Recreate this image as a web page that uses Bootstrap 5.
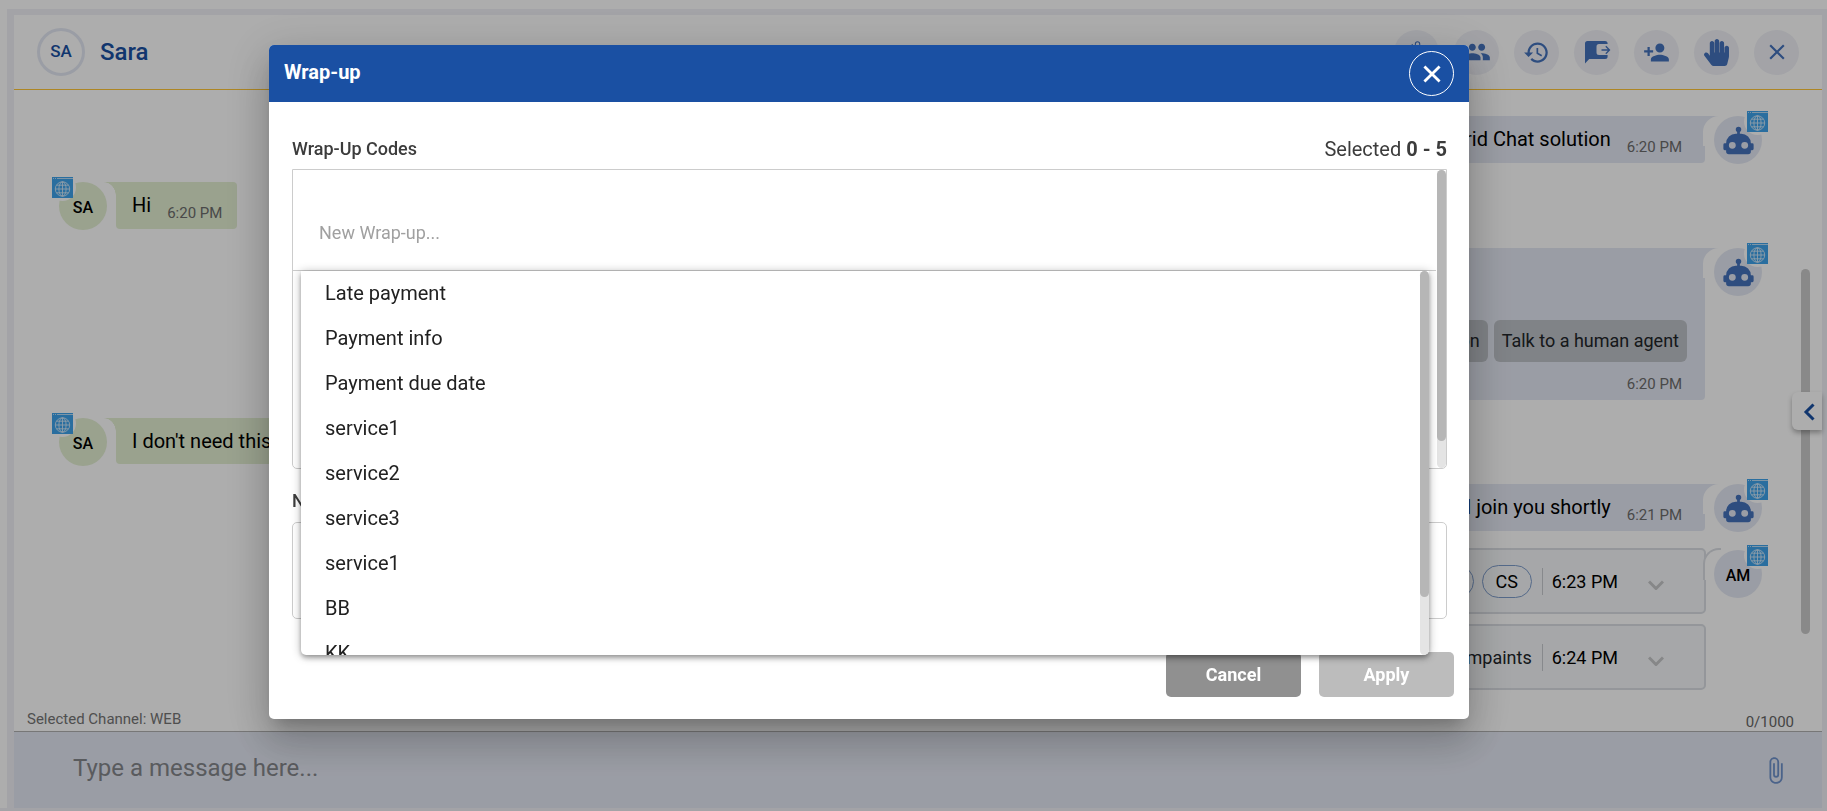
<!DOCTYPE html>
<html lang="en">
<head>
<meta charset="utf-8">
<meta name="viewport" content="width=device-width, initial-scale=1">
<title>Agent desk – Wrap-up</title>
<link href="https://cdn.jsdelivr.net/npm/bootstrap@5.3.0/dist/css/bootstrap.min.css" rel="stylesheet">
<style>
  :root { --brand: #1a50a3; --soft: #e4e8f3; --gutter: #f0f1f7; --green: #e3efd2; }
  body { font-family: Roboto, "Liberation Sans", sans-serif; color: #000; background: var(--gutter); }
  button, input, textarea { font-family: inherit; }
  .top-strip { height: 9px; background: #fff; }
  .side-strip { width: 7px; background: #fff; margin-right: 7px; }
  .desk { padding: 0 5px 3px 0; min-height: 0; }
  .panel { padding-top: 6px; min-width: 0; }
  .panel-in { background: #fff; min-height: 0; }
  .chat-head { height: 75px; padding: 0 23px; border-bottom: 1px solid #ffc636; }
  .head-avatar { width: 48px; height: 48px; border: 3px solid var(--soft); border-radius: 50%; color: var(--brand); font-size: 17px; font-weight: 500; }
  .head-name { color: var(--brand); font-size: 24px; font-weight: 500; margin-left: 15px; }
  .tool { width: 45px; height: 45px; border: 0; border-radius: 50%; background: var(--gutter); color: #4472bc; padding: 0; }
  .tools { gap: 15px; }
  .thread { padding: 26px 60px 0 45px; gap: 18px; overflow: hidden; min-height: 0; }
  .thread > * { flex-shrink: 0; }
  .msg { gap: 9px; }
  .face { position: relative; width: 48px; height: 48px; border-radius: 50%; background: var(--soft); color: #000; font-size: 16px; font-weight: 500; padding-top: 4px; z-index: 1; }
  .face.robot { color: #4472bc; padding-top: 0; }
  .msg.mine .face { background: var(--green); }
  .chan { position: absolute; top: -5px; right: -6px; width: 21px; height: 21px; }
  .chan::before { content: ""; position: absolute; inset: -3px; border-radius: 50%; background: #fff; }
  .mine .chan { right: auto; left: -7px; }
  .chan svg { position: absolute; inset: 0; }
  .bubble { position: relative; background: var(--soft); border-radius: 0 0 4px 4px; min-height: 47px; padding: 11px 23px 7px 16px; gap: 16px; font-size: 20px; line-height: 24px; }
  .bubble.short { min-height: 46px; }
  .mine .bubble { background: var(--green); border-radius: 0 4px 4px 4px; padding-right: 15px; }
  .mine .bubble::before { content: ""; position: absolute; top: 0; right: 100%; width: 12px; height: 14px; background: radial-gradient(ellipse 12px 14px at 0 100%, transparent 96%, var(--green) 100%); }
  .theirs .bubble::before, .theirs .bubble::after, .notch::before { content: ""; position: absolute; top: 0; left: calc(100% - 2px); width: 17px; }
  .theirs .bubble::before { height: 14px; background: var(--soft); }
  .theirs .bubble::after { height: 30px; background: #fff; border-top-left-radius: 16px; }
  .stamp { font-size: 15px; line-height: 18px; color: #6c6c6c; }
  .bubble > .stamp { margin-top: 11px; }
  .bubble.menu-msg { min-height: 152px; padding-right: 18px; gap: 13px; }
  .menu-msg > .stamp { margin: 0 5px 0 0; }
  .replies { gap: 6px; }
  .reply { border: 0; border-radius: 6px; background: #bdc1c7; height: 42px; padding: 0 8px; font-size: 18px; color: #212529; }
  .cards { gap: 10px; }
  .event { position: relative; height: 66px; width: 340px; border: 2px solid #dadde3; border-radius: 5px; background: #f5f7f9; font-size: 18px; padding-right: 40px; margin-right: 56px; }
  .event.first-event { margin: -2px -1px 0 0; }
  .notch::before { top: -2px; left: calc(100% - 1px); height: 32px; width: 18px; background: #fff; border: solid #dadde3; border-width: 2px 0 0 2px; border-top-left-radius: 16px; }
  .pill { border: 1px solid #7d9ccb; border-radius: 17px; width: 50px; height: 33px; }
  .when { border-left: 1px solid #c8cace; height: 27px; line-height: 27px; padding-left: 9px; margin-left: 10px; }
  .event svg { margin: 8px 0 0 30px; }
  .track-page { position: absolute; right: 12px; top: 32%; width: 9px; height: 46%; border-radius: 5px; background: #cbcbcb; }
  .drawer-tab { position: absolute; right: 0; top: 377px; width: 30px; height: 38px; border: 0; border-radius: 6px 0 0 6px; background: #fff; color: var(--brand); box-shadow: 0 3px 5px rgba(0,0,0,.3); padding: 0 0 0 4px; z-index: 2; }
  .status { padding: 0 28px 0 13px; font-size: 15px; line-height: 24px; height: 24px; color: #757575; }
  .status .tally { line-height: 18px; align-self: flex-end; color: #666; }
  .composer { height: 77px; border-top: 1px solid #b0b0b0; background: var(--soft); padding: 0 32px 0 59px; }
  .composer input { font-size: 24px; border: 0; background: transparent; outline: 0; color: #333; padding: 0 0 4px; }
  .composer input::placeholder { color: #84868b; opacity: 1; }
  .composer button { border: 0; background: transparent; color: #6f93cc; padding: 0; }

  .modal-backdrop { --bs-backdrop-opacity: .32; }
  .wrap-modal { padding-right: 89px; overflow: hidden; }
  .wrap-modal .modal-dialog { max-width: 1200px; margin: 45px auto 0; }
  .wrap-modal .modal-content { border: 0; border-radius: 5px; box-shadow: 0 11px 15px -7px rgba(0,0,0,.2), 0 24px 38px 3px rgba(0,0,0,.14), 0 9px 46px 8px rgba(0,0,0,.12); }
  .wrap-modal .modal-header { background: var(--brand); color: #fff; height: 57px; padding: 0 15px; border: 0; border-radius: 5px 5px 0 0; }
  .wrap-modal .modal-title { font-size: 20px; font-weight: 700; line-height: 24px; padding-bottom: 3px; }
  .round-close { width: 45px; height: 45px; border: 1px solid #fff; border-radius: 50%; background: transparent; color: #fff; padding: 0; }
  .wrap-modal .modal-body { padding: 35px 22px 0 23px; }
  .cap { font-size: 18px; font-weight: 500; line-height: 24px; color: #3c3c3c; }
  .count { font-size: 20px; line-height: 24px; color: #3c3c3c; }
  .codes { position: relative; height: 300px; margin-top: 8px; border: 1px solid #ccc; border-radius: 0 0 5px 5px; padding-right: 10px; }
  .codes-entry { height: 101px; border-bottom: 1px solid #ccc; padding: 50px 26px 0; }
  .codes-entry input { display: block; width: 100%; height: 24px; border: 0; outline: 0; padding: 0; font-size: 18px; color: #333; }
  .codes-entry input::placeholder { color: #a0a0a0; opacity: 1; }
  .rail { position: absolute; top: 0; right: 0; bottom: 0; width: 9px; border-radius: 5px; background: #e4e4e4; }
  .rail span { display: block; width: 100%; border-radius: 5px; background: #b6b6b6; }
  .options { position: absolute; z-index: 5; top: 101px; left: 8px; right: 17px; height: 384px; overflow: hidden; background: #fff; border-radius: 0 0 5px 5px; box-shadow: 0 2px 4px -1px rgba(0,0,0,.2), 0 4px 5px rgba(0,0,0,.14), 0 1px 10px rgba(0,0,0,.3); }
  .options li { height: 45px; line-height: 45px; padding-left: 24px; font-size: 20px; color: #212121; }
  .notes-cap { margin-top: 20px; }
  .notes { width: 100%; height: 97px; margin-top: 9px; border: 1px solid #ccc; border-radius: 5px; resize: none; }
  .wrap-modal .modal-footer { padding: 33px 15px 22px; gap: 18px; border: 0; }
  .act { width: 135px; height: 45px; margin: 0; border: 0; border-radius: 5px; background: #909090; color: #fff; font-size: 18px; font-weight: 700; }
  .act:disabled { background: #bcbcbc; color: #fff; opacity: 1; border: 0; }
</style>
</head>
<body class="vh-100 overflow-hidden d-flex flex-column">

<svg width="0" height="0" class="position-absolute" aria-hidden="true">
  <symbol id="i-bot" viewBox="0 0 24 24"><path fill="currentColor" d="M12,2A2,2 0 0,1 14,4C14,4.74 13.6,5.39 13,5.73V7H14A7,7 0 0,1 21,14H22A1,1 0 0,1 23,15V18A1,1 0 0,1 22,19H21V20A2,2 0 0,1 19,22H5A2,2 0 0,1 3,20V19H2A1,1 0 0,1 1,18V15A1,1 0 0,1 2,14H3A7,7 0 0,1 10,7H11V5.73C10.4,5.39 10,4.74 10,4A2,2 0 0,1 12,2M7.5,13A2.5,2.5 0 0,0 5,15.5A2.5,2.5 0 0,0 7.5,18A2.5,2.5 0 0,0 10,15.5A2.5,2.5 0 0,0 7.5,13M16.5,13A2.5,2.5 0 0,0 14,15.5A2.5,2.5 0 0,0 16.5,18A2.5,2.5 0 0,0 19,15.5A2.5,2.5 0 0,0 16.5,13Z"/></symbol>
  <symbol id="i-web" viewBox="0 0 21 21"><path fill="#3fa3ea" d="M0 0h21v21H0z"/><path stroke="#b9dcf5" d="M5 1.500h16M1 1.500h1M3 1.500h1"/><g fill="none" stroke="#d3e8f8" stroke-width=".9"><circle cx="10.500" cy="12" r="7.200"/><ellipse cx="10.500" cy="12" rx="3.600" ry="7.200"/><path d="M10.500 4.800v14.400M3.300 12h14.400M4.800 8.200h11.400M4.800 15.800h11.400"/></g></symbol>
  <symbol id="i-x" viewBox="0 0 24 24"><path fill="currentColor" d="M19 6.410 17.590 5 12 10.590 6.410 5 5 6.410 10.590 12 5 17.590 6.410 19 12 13.410 17.590 19 19 17.590 13.410 12z"/></symbol>
  <symbol id="i-down" viewBox="0 0 16 10"><path d="M1 1.500l7 7 7-7" fill="none" stroke="#c6c7c9" stroke-width="3"/></symbol>
</svg>

<div class="top-strip flex-shrink-0"></div>
<div class="desk d-flex flex-grow-1">
  <div class="side-strip flex-shrink-0"></div>
  <main class="panel flex-grow-1 d-flex flex-column">
    <div class="panel-in position-relative flex-grow-1 d-flex flex-column">
      <header class="chat-head d-flex align-items-center flex-shrink-0">
        <div class="head-avatar d-flex align-items-center justify-content-center">SA</div>
        <div class="head-name">Sara</div>
        <div class="tools d-flex ms-auto">
          <button class="tool" type="button" aria-label="Labels"><svg width="26" height="26" viewBox="0 0 24 24"><path fill="none" stroke="currentColor" stroke-width="1" d="M10.500 6V4.500a2 2 0 0 1 4 0V6M8 5l-1 1M12 8v12"/></svg></button>
          <button class="tool" type="button" aria-label="Participants"><svg width="28" height="28" viewBox="0 0 24 24"><path fill="currentColor" d="M16 11c1.660 0 2.990-1.340 2.990-3S17.660 5 16 5c-1.660 0-3 1.340-3 3s1.340 3 3 3zm-8 0c1.660 0 2.990-1.340 2.990-3S9.660 5 8 5C6.340 5 5 6.340 5 8s1.340 3 3 3zm0 2c-2.330 0-7 1.170-7 3.500V19h14v-2.500c0-2.330-4.670-3.500-7-3.500zm8 0c-.29 0-.62.02-.97.05 1.160.84 1.970 1.970 1.970 3.450V19h6v-2.500c0-2.330-4.670-3.500-7-3.500z"/></svg></button>
          <button class="tool" type="button" aria-label="History"><svg width="27" height="27" viewBox="0 0 24 24"><path fill="currentColor" d="M13 3c-4.970 0-9 4.030-9 9H1l3.890 3.890.07.14L9 12H6c0-3.870 3.130-7 7-7s7 3.130 7 7-3.130 7-7 7c-1.930 0-3.680-.79-4.940-2.060l-1.420 1.420C8.270 19.990 10.510 21 13 21c4.970 0 9-4.030 9-9s-4.030-9-9-9zm-1 5v5l4.280 2.540.72-1.210-3.500-2.080V8H12z"/></svg></button>
          <button class="tool" type="button" aria-label="Transfer chat"><svg width="28" height="28" viewBox="0 0 28 28"><path fill="currentColor" d="M4.500 3H22a2.600 2.600 0 0 1 2.600 2.600V6H16a2.500 2.500 0 0 0-2.500 2.500v6A2.500 2.500 0 0 0 16 17h8.600v1.500A2.500 2.500 0 0 1 22.100 21H6.200L2 25.500V5.500A2.500 2.500 0 0 1 4.500 3z"/><path fill="none" stroke="currentColor" stroke-width="1.300" d="M18.500 12h8M22.800 8.200l3.700 3.800-3.700 3.800"/></svg></button>
          <button class="tool" type="button" aria-label="Add person"><svg width="27" height="27" viewBox="0 0 24 24"><path fill="currentColor" d="M15 12c2.210 0 4-1.790 4-4s-1.790-4-4-4-4 1.790-4 4 1.790 4 4 4zm-9-2V7H4v3H1v2h3v3h2v-3h3v-2H6zm9 4c-2.670 0-8 1.340-8 4v2h16v-2c0-2.660-5.330-4-8-4z"/></svg></button>
          <button class="tool" type="button" aria-label="Raise hand"><svg width="25" height="27" viewBox="0 0 448 512" preserveAspectRatio="none"><path fill="currentColor" d="M408.781 128.007C386.356 127.578 368 146.360 368 168.790V256h-8V79.790c0-22.430-18.356-41.212-40.781-40.783C297.488 39.423 280 57.169 280 79v177h-8V40.790C272 18.360 253.644-.422 231.219.007 209.488.423 192 18.169 192 40v216h-8V80.790c0-22.430-18.356-41.212-40.781-40.783C121.488 40.423 104 58.169 104 80v235.992l-31.648-43.519c-12.993-17.866-38.009-21.817-55.877-8.823-17.865 12.994-21.815 38.010-8.822 55.877l125.601 172.705A48 48 0 0 0 172.073 512h197.590c22.274 0 41.622-15.324 46.724-37.006l26.508-112.660a192.011 192.011 0 0 0 5.104-43.975V168c.001-21.831-17.487-39.577-39.218-39.993z"/></svg></button>
          <button class="tool" type="button" aria-label="End chat"><svg width="26" height="26"><use href="#i-x"/></svg></button>
        </div>
      </header>

      <section class="thread flex-grow-1 d-flex flex-column" aria-label="Conversation">
        <div class="msg theirs d-flex justify-content-end">
          <div class="bubble d-flex align-items-start align-self-start"><span>Hybrid Chat solution</span><span class="stamp">6:20 PM</span></div>
          <div class="face robot d-flex align-items-center justify-content-center"><svg width="33" height="33"><use href="#i-bot"/></svg><span class="chan"><svg width="21" height="21"><use href="#i-web"/></svg></span></div>
        </div>
        <div class="msg mine d-flex">
          <div class="face d-flex align-items-center justify-content-center"><span class="chan"><svg width="21" height="21"><use href="#i-web"/></svg></span><span class="position-relative">SA</span></div>
          <div class="bubble d-flex align-items-start align-self-start"><span>Hi</span><span class="stamp">6:20 PM</span></div>
        </div>
        <div class="msg theirs d-flex justify-content-end">
          <div class="bubble menu-msg d-flex flex-column justify-content-end align-items-end">
            <div class="replies d-flex"><button class="reply" type="button">Information</button><button class="reply" type="button">Talk to a human agent</button></div>
            <span class="stamp">6:20 PM</span>
          </div>
          <div class="face robot d-flex align-items-center justify-content-center"><svg width="33" height="33"><use href="#i-bot"/></svg><span class="chan"><svg width="21" height="21"><use href="#i-web"/></svg></span></div>
        </div>
        <div class="msg mine d-flex">
          <div class="face d-flex align-items-center justify-content-center"><span class="chan"><svg width="21" height="21"><use href="#i-web"/></svg></span><span class="position-relative">SA</span></div>
          <div class="bubble short d-flex align-items-start align-self-start"><span>I don't need this</span></div>
        </div>
        <div class="msg theirs d-flex justify-content-end">
          <div class="bubble short d-flex align-items-start align-self-start"><span>will join you shortly</span><span class="stamp">6:21 PM</span></div>
          <div class="face robot d-flex align-items-center justify-content-center"><svg width="33" height="33"><use href="#i-bot"/></svg><span class="chan"><svg width="21" height="21"><use href="#i-web"/></svg></span></div>
        </div>
        <div class="cards d-flex flex-column align-items-end">
          <div class="msg d-flex">
            <div class="event first-event notch d-flex align-items-center justify-content-end"><span class="pill me-2"></span><span class="pill d-flex align-items-center justify-content-center">CS</span><span class="when">6:23 PM</span><svg width="16" height="10"><use href="#i-down"/></svg></div>
            <div class="face d-flex align-items-center justify-content-center"><span class="chan"><svg width="21" height="21"><use href="#i-web"/></svg></span><span class="position-relative">AM</span></div>
          </div>
          <div class="event d-flex align-items-center justify-content-end"><span class="text-body">Compaints</span><span class="when">6:24 PM</span><svg width="16" height="10"><use href="#i-down"/></svg></div>
        </div>
      </section>

      <div class="track-page"></div>
      <button class="drawer-tab" type="button" aria-label="Open side panel"><svg width="12" height="18" viewBox="0 0 12 18"><path d="M10.500 1.500 3 9l7.500 7.500" fill="none" stroke="currentColor" stroke-width="3"/></svg></button>

      <div class="status d-flex justify-content-between flex-shrink-0"><span>Selected Channel: WEB</span><span class="tally">0/1000</span></div>
      <form class="composer d-flex align-items-center flex-shrink-0">
        <input class="flex-grow-1" type="text" placeholder="Type a message here..." aria-label="Message">
        <button type="button" aria-label="Attach file"><svg width="29" height="29" viewBox="0 0 24 24"><path fill="currentColor" d="M16.500 6v11.500c0 2.210-1.790 4-4 4s-4-1.790-4-4V5a2.500 2.500 0 0 1 5 0v10.500c0 .55-.45 1-1 1s-1-.45-1-1V6H10v9.500a2.500 2.500 0 0 0 5 0V5c0-2.210-1.790-4-4-4S7 2.790 7 5v12.500c0 3.040 2.460 5.500 5.500 5.500s5.500-2.460 5.500-5.500V6h-1.500z"/></svg></button>
      </form>
    </div>
  </main>
</div>

<div class="modal-backdrop show"></div>
<div class="modal wrap-modal d-block" role="dialog" aria-modal="true" aria-labelledby="wrapTitle">
  <div class="modal-dialog">
    <div class="modal-content">
      <div class="modal-header d-flex align-items-center justify-content-between">
        <h1 class="modal-title" id="wrapTitle">Wrap-up</h1>
        <button class="round-close" type="button" aria-label="Close"><svg width="28" height="28" viewBox="0 0 24 24"><path d="M5.500 5.500l13 13M18.500 5.500l-13 13" fill="none" stroke="currentColor" stroke-width="2.400"/></svg></button>
      </div>
      <div class="modal-body">
        <div class="d-flex justify-content-between"><label class="cap" for="code">Wrap-Up Codes</label><span class="count">Selected <b>0 - 5</b></span></div>
        <div class="codes">
          <div class="codes-entry"><input id="code" type="text" placeholder="New Wrap-up..." role="combobox" aria-expanded="true" aria-controls="codeList"></div>
          <div class="rail"><span style="height:91%"></span></div>
          <div class="options">
            <ul class="list-unstyled m-0" id="codeList" role="listbox">
              <li role="option">Late payment</li>
              <li role="option">Payment info</li>
              <li role="option">Payment due date</li>
              <li role="option">service1</li>
              <li role="option">service2</li>
              <li role="option">service3</li>
              <li role="option">service1</li>
              <li role="option">BB</li>
              <li role="option">KK</li>
            </ul>
            <div class="rail"><span style="height:85%"></span></div>
          </div>
        </div>
        <label class="cap notes-cap d-block" for="notes">Notes</label>
        <textarea class="notes d-block" id="notes"></textarea>
      </div>
      <div class="modal-footer">
        <button class="btn act" type="button">Cancel</button>
        <button class="btn act" type="button" disabled>Apply</button>
      </div>
    </div>
  </div>
</div>
<script src="https://cdn.jsdelivr.net/npm/bootstrap@5.3.0/dist/js/bootstrap.bundle.min.js"></script>
</body>
</html>
